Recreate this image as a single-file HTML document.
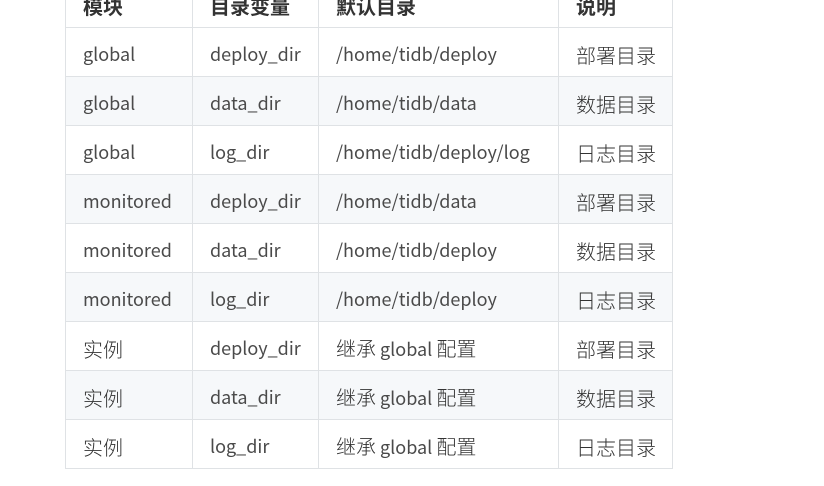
<!DOCTYPE html><html><head><meta charset="utf-8"><style>
body{margin:0;background:#fff;width:824px;height:486px;overflow:hidden;position:relative}
table{position:absolute;left:65px;top:-22px;border-collapse:collapse;font-family:"Noto Sans CJK SC",sans-serif;font-size:18px;color:#4a4a4a;line-height:1.2;font-weight:400}
td,th{border:1px solid #dfe2e5;height:49px;padding:5px 0 0 17px;text-align:left;box-sizing:border-box;white-space:nowrap}
th{font-weight:bold;color:#333;font-size:20px}
tr:nth-child(odd) td{background:#f6f8fa}
.c{font-size:20px;font-weight:300;color:#333}
</style></head><body>
<table>
<colgroup><col style="width:127px"><col style="width:126px"><col style="width:240px"><col style="width:114px"></colgroup>
<tr><th>模块</th><th>目录变量</th><th>默认目录</th><th>说明</th></tr>
<tr><td>global</td><td>deploy_dir</td><td>/home/tidb/deploy</td><td class="c">部署目录</td></tr>
<tr><td>global</td><td>data_dir</td><td>/home/tidb/data</td><td class="c">数据目录</td></tr>
<tr><td>global</td><td>log_dir</td><td>/home/tidb/deploy/log</td><td class="c">日志目录</td></tr>
<tr><td>monitored</td><td>deploy_dir</td><td>/home/tidb/data</td><td class="c">部署目录</td></tr>
<tr><td>monitored</td><td>data_dir</td><td>/home/tidb/deploy</td><td class="c">数据目录</td></tr>
<tr><td>monitored</td><td>log_dir</td><td>/home/tidb/deploy</td><td class="c">日志目录</td></tr>
<tr><td class="c">实例</td><td>deploy_dir</td><td><span class="c">继承</span> global <span class="c">配置</span></td><td class="c">部署目录</td></tr>
<tr><td class="c">实例</td><td>data_dir</td><td><span class="c">继承</span> global <span class="c">配置</span></td><td class="c">数据目录</td></tr>
<tr><td class="c">实例</td><td>log_dir</td><td><span class="c">继承</span> global <span class="c">配置</span></td><td class="c">日志目录</td></tr>
</table>
</body></html>
